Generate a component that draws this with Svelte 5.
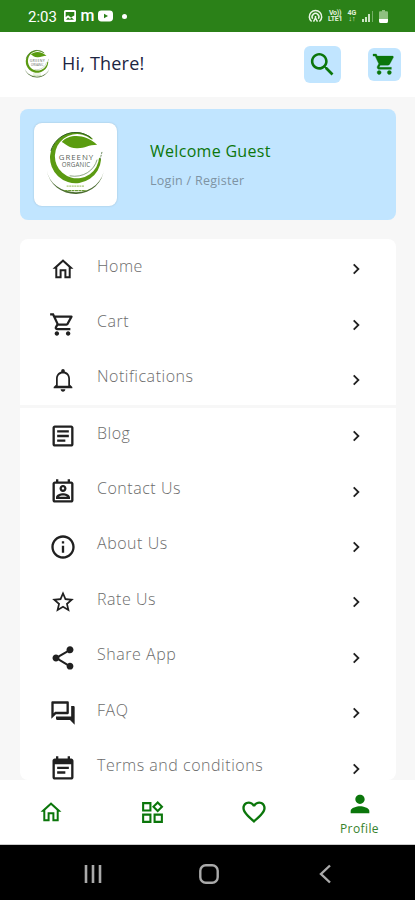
<script lang="ts">
	type MenuItem = {
		label: string;
		icon: string;
		size?: number;
	};

	const homePath =
		'M12 6.1l4.9 4.4v7.8h-2v-6H9.1v6h-2v-7.8L12 6.1M12 3.7L3 11.8h2.4V20h5.4v-6h2.4v6h5.4v-8.2H21L12 3.7z';

	const shopItems: MenuItem[] = [
		{ label: 'Home', icon: homePath },
		{
			label: 'Cart',
			icon: 'M15.55 13c.75 0 1.41-.41 1.75-1.03l3.58-6.49c.37-.66-.11-1.48-.87-1.48H5.21l-.94-2H1v2h2l3.6 7.59-1.35 2.44C4.52 15.37 5.48 17 7 17h12v-2H7l1.1-2h7.45zM6.16 6h12.15l-2.76 5H8.53L6.16 6zM7 18c-1.1 0-1.99.9-1.99 2S5.9 22 7 22s2-.9 2-2-.9-2-2-2zm10 0c-1.1 0-1.99.9-1.99 2s.89 2 1.99 2 2-.9 2-2-.9-2-2-2z',
			size: 27
		},
		{
			label: 'Notifications',
			icon: 'M12 22c1.1 0 2-.9 2-2h-4c0 1.1.9 2 2 2zm6-6v-5c0-3.07-1.63-5.64-4.5-6.32V4c0-.83-.67-1.5-1.5-1.5s-1.5.67-1.5 1.5v.68C7.64 5.36 6 7.92 6 11v5l-2 2v1h16v-1l-2-2zm-1.5 1h-9v-6c0-2.48 1.51-4.5 4.5-4.5s4.5 2.02 4.5 4.5v6z'
		}
	];

	const infoItems: MenuItem[] = [
		{
			label: 'Blog',
			icon: 'M19 5v14H5V5h14m0-2H5c-1.1 0-2 .9-2 2v14c0 1.1.9 2 2 2h14c1.1 0 2-.9 2-2V5c0-1.1-.9-2-2-2zM14 17H7v-2h7v2zm3-4H7v-2h10v2zm0-4H7V7h10v2z'
		},
		{
			label: 'Contact Us',
			icon: 'M19 3h-1V1h-2v2H8V1H6v2H5c-1.11 0-2 .9-2 2v14c0 1.1.89 2 2 2h14c1.1 0 2-.9 2-2V5c0-1.1-.9-2-2-2zm0 16H5V5h14v14zM12 12c1.65 0 3-1.35 3-3s-1.35-3-3-3-3 1.35-3 3 1.35 3 3 3zm0-4c.55 0 1 .45 1 1s-.45 1-1 1-1-.45-1-1 .45-1 1-1zm6 8.58c0-2.5-3.97-3.58-6-3.58s-6 1.08-6 3.58V18h12v-1.42zM8.48 16c.74-.51 2.23-1 3.52-1s2.78.49 3.52 1H8.48z'
		},
		{
			label: 'About Us',
			icon: 'M11 7h2v2h-2zm0 4h2v6h-2zm1-9C6.48 2 2 6.48 2 12s4.48 10 10 10 10-4.48 10-10S17.52 2 12 2zm0 18c-4.41 0-8-3.59-8-8s3.59-8 8-8 8 3.59 8 8-3.59 8-8 8z'
		},
		{
			label: 'Rate Us',
			icon: 'M22 9.24l-7.19-.62L12 2 9.19 8.63 2 9.24l5.46 4.73L5.82 21 12 17.27 18.18 21l-1.63-7.03L22 9.24zM12 15.4l-3.76 2.27 1-4.28-3.32-2.88 4.38-.38L12 6.1l1.71 4.04 4.38.38-3.32 2.88 1 4.28L12 15.4z',
			size: 26
		},
		{
			label: 'Share App',
			icon: 'M18 16.08c-.76 0-1.44.3-1.96.77L8.91 12.7c.05-.23.09-.46.09-.7s-.04-.47-.09-.7l7.05-4.11c.54.5 1.25.81 2.04.81 1.66 0 3-1.34 3-3s-1.34-3-3-3-3 1.34-3 3c0 .24.04.47.09.7L8.04 9.81C7.5 9.31 6.79 9 6 9c-1.66 0-3 1.34-3 3s1.34 3 3 3c.79 0 1.5-.31 2.04-.81l7.12 4.16c-.05.21-.08.43-.08.65 0 1.61 1.31 2.92 2.92 2.92s2.92-1.31 2.92-2.92-1.31-2.92-2.92-2.92z'
		},
		{
			label: 'FAQ',
			icon: 'M15 4v7H5.17L4 12.17V4h11m1-2H3c-.55 0-1 .45-1 1v14l4-4h10c.55 0 1-.45 1-1V3c0-.55-.45-1-1-1zm5 4h-2v9H6v2c0 .55.45 1 1 1h11l4 4V7c0-.55-.45-1-1-1z'
		},
		{
			label: 'Terms and conditions',
			icon: 'M19 3h-1V1h-2v2H8V1H6v2H5c-1.1 0-2 .9-2 2v14c0 1.1.9 2 2 2h14c1.1 0 2-.9 2-2V5c0-1.1-.9-2-2-2zm0 16H5V8h14v11zM7 10h10v2H7zm0 4h7v2H7z'
		}
	];

	const tabs = [
		{ name: 'home', size: 28, icon: homePath },
		{
			name: 'categories',
			size: 25,
			icon: 'M17 3.8L19.7 6.5 17 9.2 14.3 6.5 17 3.8M17 1l-5.5 5.5L17 12l5.5-5.5L17 1zM9 4v5H4V4h5m2-2H2v9h9V2zm9 13v5h-5v-5h5m2-2h-9v9h9v-9zM9 15v5H4v-5h5m2-2H2v9h9v-9z'
		},
		{
			name: 'wishlist',
			size: 28,
			icon: 'M16.5 3c-1.74 0-3.41.81-4.5 2.09C10.91 3.81 9.24 3 7.5 3 4.42 3 2 5.42 2 8.5c0 3.78 3.4 6.86 8.55 11.54L12 21.35l1.45-1.32C18.6 15.36 22 12.28 22 8.5 22 5.42 19.58 3 16.5 3zm-4.4 15.55l-.1.1-.1-.1C7.14 14.24 4 11.39 4 8.5 4 6.5 5.5 5 7.5 5c1.54 0 3.04.99 3.57 2.36h1.87C13.46 5.99 14.96 5 16.5 5c2 0 3.5 1.5 3.5 3.5 0 2.89-3.14 5.74-7.9 10.05z'
		}
	];
</script>

{#snippet glyph(path: string, size: number)}
	<svg viewBox="0 0 24 24" width={size} height={size} fill="currentColor"><path d={path} /></svg>
{/snippet}

{#snippet logo(width: number, height: number)}
	<svg viewBox="0 0 60 68" {width} {height}>
		<!-- outer swoosh -->
		<path d="M1 40A29.1 27 0 0 0 59 38A29.1 25 0 0 1 1 40Z" fill="#4a6b30" />
		<!-- ring, heavier at the bottom left -->
		<path
			d="M48 8.2A26 26 0 1 0 56 29L54 27A22.5 22.5 0 1 1 46 8.3Z"
			fill="#5b9a12"
		/>
		<path d="M5 20A26 26 0 0 1 46 7" fill="none" stroke="#315f25" stroke-width="1" />
		<path d="M24 45.5C38 48 49 40 52 29" fill="none" stroke="#426b32" stroke-width=".6" />
		<path d="M55 29L57 21" stroke="#426b32" stroke-width=".8" stroke-dasharray="2 1" />
		<path d="M16 11C24 2 41 3 52 14C43 14 39 18 31 17.5C23 17 20 13 16 11Z" fill="#5a9c10" />
		<text x="30.5" y="29" font-size="8" textLength="35" class="logo-name">GREENY</text>
		<text x="30.5" y="37" font-size="6.3" textLength="29" class="logo-name">ORGANIC</text>
		<path d="M21 56H39" stroke="#a8c878" stroke-width="1.2" stroke-dasharray="2 .6" />
		<path d="M19 60.5H41" stroke="#6b9d35" stroke-width="1.3" stroke-dasharray="3 .5" />
	</svg>
{/snippet}

{#snippet row(item: MenuItem)}
	<a class="row" href="#{item.label}">
		<span class="row-icon">{@render glyph(item.icon, item.size ?? 28)}</span>
		<span class="row-label">{item.label}</span>
		<svg viewBox="0 0 8 12" width="8" height="12">
			<path d="M1.7 1.3L6.4 6L1.7 10.7" fill="none" stroke="currentColor" stroke-width="1.8" />
		</svg>
	</a>
{/snippet}

<div class="screen">
	<div class="status-bar">
		<div class="status-left">
			<span class="clock">2:03</span>
			<svg width="12" height="12" viewBox="0 0 12 12">
				<path
					fill="#fff"
					fill-rule="evenodd"
					d="M1.5 0h9Q12 0 12 1.5v9q0 1.5-1.5 1.5h-9Q0 12 0 10.5v-9Q0 0 1.5 0zM1.7 2v5l2.4-1.8 2.7 2.2 3.5-2V2zM2 9.8h8L7.6 7.5 6 9 4 7.4z"
				/>
			</svg>
			<span class="m-app">m</span>
			<svg width="15" height="12" viewBox="0 0 15 12">
				<rect y=".5" width="15" height="11" rx="3.4" fill="#fff" />
				<path d="M6 3.7v4.6L10 6z" fill="#2b8118" />
			</svg>
			<span class="dot"></span>
		</div>
		<div class="status-right">
			<svg width="15" height="14" viewBox="0 0 15 14" fill="none" stroke="#e9f5e5" stroke-width="1.5">
				<path d="M3.6 12.5A6.2 6.2 0 1 1 11.4 12.5" />
				<path d="M4.7 9.8A3.4 3.4 0 1 1 10.3 9.8" />
				<path d="M7.5 7v3M5.5 12.7L7.5 9l2 3.7" />
			</svg>
			<span class="network volte">Vo))<br />LTE1</span>
			<span class="network">4G<br />↓↑</span>
			<svg width="12" height="12" viewBox="0 0 12 12" fill="#cce4c5">
				<path d="M0 9h2v3H0zM3 7h2v5H3zM6 4h2v8H6z" />
				<path d="M10 1h1v11h-1z" opacity=".45" />
			</svg>
			<svg width="9" height="13" viewBox="0 0 9 13">
				<path d="M3 0h3v1.2H8Q9 1.2 9 2.5V11Q9 13 7.5 13h-6Q0 13 0 11V2.5Q0 1.2 1 1.2h2z" fill="#8fc080" />
				<path d="M0 9h9v2q0 2-1.5 2h-6Q0 13 0 11z" fill="#fff" />
			</svg>
		</div>
	</div>

	<header>
		{@render logo(26, 31)}
		<h1>Hi, There!</h1>
		<button class="search" aria-label="Search">
			{@render glyph(
				'M15.5 14h-.79l-.28-.27C15.41 12.59 16 11.11 16 9.5 16 5.91 13.09 3 9.5 3S3 5.91 3 9.5 5.91 16 9.5 16c1.61 0 3.09-.59 4.23-1.57l.27.28v.79l5 4.99L20.49 19l-4.99-5zm-6 0C7.01 14 5 11.99 5 9.5S7.01 5 9.5 5 14 7.01 14 9.5 11.99 14 9.5 14z',
				31
			)}
		</button>
		<button class="basket" aria-label="Cart">
			<!-- solid basket -->
			{@render glyph(
				'M7 18c-1.1 0-1.99.9-1.99 2S5.9 22 7 22s2-.9 2-2-.9-2-2-2zM1 2v2h2l3.6 7.59-1.35 2.45c-.16.28-.25.61-.25.96 0 1.1.9 2 2 2h12v-2H7.42c-.14 0-.25-.11-.25-.25l.03-.12.9-1.63h7.45c.75 0 1.41-.41 1.75-1.03l3.58-6.49c.08-.14.12-.31.12-.48 0-.55-.45-1-1-1H5.21l-.94-2H1zm16 16c-1.1 0-1.99.9-1.99 2s.89 2 1.99 2 2-.9 2-2-.9-2-2-2z',
				24.5
			)}
		</button>
	</header>

	<main>
		<section class="welcome">
			<div class="avatar">{@render logo(59, 67)}</div>
			<div class="welcome-text">
				<h2>Welcome Guest</h2>
				<p>Login / Register</p>
			</div>
		</section>

		<nav class="menu">
			<div class="group">
				{#each shopItems as item (item.label)}
					{@render row(item)}
				{/each}
			</div>
			<div class="group">
				{#each infoItems as item (item.label)}
					{@render row(item)}
				{/each}
			</div>
		</nav>
	</main>

	<nav class="tabs">
		{#each tabs as tab (tab.name)}
			<button aria-label={tab.name}>{@render glyph(tab.icon, tab.size)}</button>
		{/each}
		<button class="active">
			{@render glyph(
				'M12 12c2.21 0 4-1.79 4-4s-1.79-4-4-4-4 1.79-4 4 1.79 4 4 4zm0 2c-2.67 0-8 1.34-8 4v2h16v-2c0-2.66-5.33-4-8-4z',
				28
			)}
			<span>Profile</span>
		</button>
	</nav>

	<div class="system-bar">
		<svg width="20" height="20" viewBox="0 0 20 20" stroke="#aaa" stroke-width="2.6">
			<path d="M3 1v18M10 1v18M17 1v18" />
		</svg>
		<svg width="20" height="20" viewBox="0 0 20 20" fill="none" stroke="#aaa" stroke-width="2.4">
			<rect x="1.3" y="1.3" width="17.4" height="17.4" rx="5.5" />
		</svg>
		<svg width="20" height="20" viewBox="0 0 20 20" fill="none" stroke="#aaa" stroke-width="2.4">
			<path d="M15 1.5L6 10l9 8.5" />
		</svg>
	</div>
</div>

<style>
	:global(body) { margin: 0; }
	.screen {
		width: 415px;
		height: 900px;
		display: flex;
		flex-direction: column;
		overflow: hidden;
		background: #f7f7f7;
		font-family: 'Open Sans', 'Noto Sans', sans-serif;
	}
	svg { display: block; flex-shrink: 0; }
	h1, h2, p { margin: 0; font-weight: 400; }
	button {
		display: flex;
		align-items: center;
		justify-content: center;
		padding: 0;
		border: 0;
		background: none;
		color: #0b760b;
		font-family: inherit;
	}

	.status-bar {
		height: 32px;
		flex-shrink: 0;
		display: flex;
		align-items: center;
		justify-content: space-between;
		padding: 0 27px 0 28px;
		box-sizing: border-box;
		background: #2b8118;
		color: #fff;
	}
	.status-left { display: flex; align-items: center; }
	.clock { width: 36px; margin-top: 1px; font: 400 15px/20px Roboto, sans-serif; }
	.m-app {
		width: 13px;
		margin: 0 4px 0 5px;
		display: flex;
		justify-content: center;
		font: 500 16px/16px Roboto, sans-serif;
	}
	.dot { width: 5px; height: 5px; margin-left: 9px; border-radius: 50%; background: #fff; }
	.status-right { display: flex; align-items: center; gap: 5px; }
	.network { width: 10px; text-align: center; color: #e3f1de; font: 700 7px/6.5px Roboto, sans-serif; }
	.volte { width: 14px; letter-spacing: -0.3px; }

	header {
		height: 65px;
		flex-shrink: 0;
		display: flex;
		align-items: center;
		padding: 0 14px 0 24px;
		box-sizing: border-box;
		background: #fff;
	}
	h1 {
		flex: 1;
		margin: -3px 0 0 12px;
		color: #1c2542;
		font-size: 18px;
		font-weight: 500;
		letter-spacing: 0.2px;
		line-height: 24px;
	}
	.search, .basket { border-radius: 6px; background: #c1e5ff; }
	.search { width: 37px; height: 37px; }
	.basket { width: 33px; height: 33px; margin-left: 27px; }
	.basket svg { stroke: currentColor; stroke-width: 0.3; }

	main {
		flex: 1;
		min-height: 0;
		display: flex;
		flex-direction: column;
		padding: 12px 19px 0 20px;
	}
	.welcome {
		display: flex;
		align-items: center;
		height: 111px;
		flex-shrink: 0;
		padding-left: 14px;
		border-radius: 8px;
		background: #c1e5ff;
	}
	.avatar {
		width: 83px;
		height: 83px;
		display: flex;
		align-items: center;
		justify-content: center;
		border-radius: 8px;
		background: #fff;
		box-shadow: 0 0 2px #9dbdd2;
	}
	.welcome-text { margin-left: 33px; }
	h2 { color: #0b760b; font-size: 16px; font-weight: 500; letter-spacing: 0.3px; line-height: 24px; }
	p { margin-top: 9px; color: #7e93a3; font-size: 12.5px; letter-spacing: 0.28px; line-height: 18px; }

	.menu {
		flex: 1;
		min-height: 0;
		display: flex;
		flex-direction: column;
		gap: 3px;
		margin-top: 19px;
		overflow: hidden;
		border-radius: 8px;
	}
	.group { flex-shrink: 0; background: #fff; }
	.row {
		display: flex;
		align-items: center;
		height: 55.4px;
		padding: 5px 36px 0 28px;
		box-sizing: border-box;
		color: #202020;
		text-decoration: none;
	}
	.group:last-child .row { padding-top: 0.6px; }
	.row-icon { width: 29px; display: flex; justify-content: center; }
	.row-label {
		flex: 1;
		margin: -7px 0 0 20px;
		color: #6c6c6c;
		font-size: 16px;
		font-weight: 300;
		letter-spacing: 0.53px;
		line-height: 24px;
	}

	.tabs {
		height: 65px;
		flex-shrink: 0;
		display: grid;
		grid-template-columns: repeat(3, 101.5px) 110px;
		box-sizing: border-box;
		background: #fff;
		border-bottom: 1px solid #ccc;
	}
	.active { flex-direction: column; gap: 2px; padding-top: 3px; }
	.active span { color: #37822c; font-size: 12px; letter-spacing: 0.4px; line-height: 18px; }

	.system-bar {
		height: 55px;
		flex-shrink: 0;
		display: flex;
		align-items: center;
		justify-content: space-between;
		padding: 3px 80px 0 83px;
		box-sizing: border-box;
		background: #000;
	}
	.logo-name {
		text-anchor: middle;
		fill: #59645a;
		font-family: 'Open Sans', sans-serif;
	}
</style>
